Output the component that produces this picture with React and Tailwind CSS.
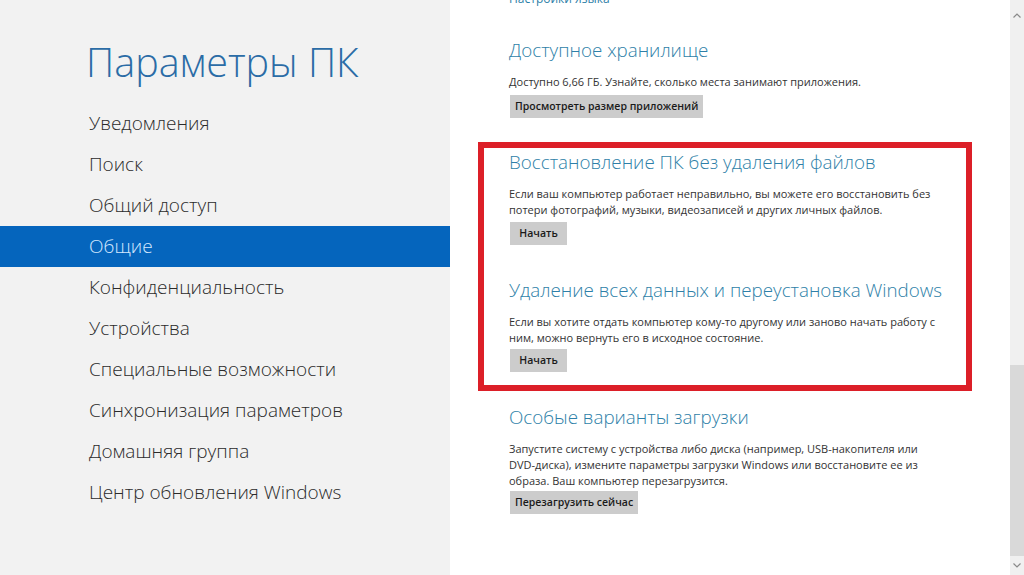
import React from "react";

const nav = [
  "Уведомления",
  "Поиск",
  "Общий доступ",
  "Общие",
  "Конфиденциальность",
  "Устройства",
  "Специальные возможности",
  "Синхронизация параметров",
  "Домашняя группа",
  "Центр обновления Windows",
];

function Btn({ children }) {
  return (
    <div className="flex pl-[1px]">
      <div className="h-[23px] min-w-[57px] px-[5px] bg-[#cccccc] flex items-center justify-center text-[10.5px] font-semibold text-[#1a1a1a] whitespace-nowrap">
        {children}
      </div>
    </div>
  );
}

function Heading({ children }) {
  return (
    <div className="text-[18.8px] leading-[28px] font-light text-[#2e7fa8] whitespace-nowrap">
      {children}
    </div>
  );
}

function Desc({ children, className = "" }) {
  return (
    <div className={"text-[11px] leading-[16px] text-[#333333] whitespace-nowrap " + className}>
      {children}
    </div>
  );
}

export default function App() {
  return (
    <div className="w-[1024px] h-[575px] overflow-hidden flex bg-white font-['Open_Sans','Noto_Sans',sans-serif]">
      <aside className="w-[450px] shrink-0 bg-[#f2f2f2] flex flex-col pt-[38px]">
        <h1 className="pl-[86px] text-[39.5px] leading-[48px] font-light text-[#2b6ca6] whitespace-nowrap">
          Параметры ПК
        </h1>
        <nav className="mt-[17px] flex flex-col">
          {nav.map((n) => (
            <div
              key={n}
              className={
                "h-[41px] pl-[89px] flex items-center text-[19px] font-light whitespace-nowrap " +
                (n === "Общие" ? "bg-[#0565bd] text-[#d4e8ff]" : "text-[#2b2b2b]")
              }
            >
              {n}
            </div>
          ))}
        </nav>
      </aside>

      <main className="flex-1 flex min-w-0">
        <div className="flex-1 flex flex-col pl-[59px] min-w-0">
          <div className="-mt-[9px] text-[12px] leading-[16px] text-[#2e7fa8] whitespace-nowrap">
            Настройки языка
          </div>

          <div className="mt-[29px]">
            <Heading>Доступное хранилище</Heading>
            <Desc className="mt-[10px]">
              Доступно 6,66 ГБ. Узнайте, сколько места занимают приложения.
            </Desc>
            <div className="mt-[5px]">
              <Btn>Просмотреть размер приложений</Btn>
            </div>
          </div>

          <div className="mt-[24px] -ml-[31px] w-[494px] border-[6px] border-[#dc1f28] pl-[25px] pb-[13px]">
            <Heading>Восстановление ПК без удаления файлов</Heading>
            <Desc className="mt-[10px]">
              Если ваш компьютер работает неправильно, вы можете его восстановить без
              <br />
              потери фотографий, музыки, видеозаписей и других личных файлов.
            </Desc>
            <div className="mt-[4px]">
              <Btn>Начать</Btn>
            </div>

            <div className="mt-[31px]">
              <Heading>Удаление всех данных и переустановка Windows</Heading>
            </div>
            <Desc className="mt-[10px]">
              Если вы хотите отдать компьютер кому-то другому или заново начать работу с
              <br />
              ним, можно вернуть его в исходное состояние.
            </Desc>
            <div className="mt-[3px]">
              <Btn>Начать</Btn>
            </div>
          </div>

          <div className="mt-[12px]">
            <Heading>Особые варианты загрузки</Heading>
            <Desc className="mt-[10px] leading-[15.5px]">
              Запустите систему с устройства либо диска (например, USB-накопителя или
              <br />
              DVD-диска), измените параметры загрузки Windows или восстановите ее из
              <br />
              образа. Ваш компьютер перезагрузится.
            </Desc>
            <div className="mt-[2px]">
              <Btn>Перезагрузить сейчас</Btn>
            </div>
          </div>
        </div>

        <div className="w-[14px] shrink-0 bg-[#f0f0f0] flex flex-col">
          <div className="h-[30px] flex items-center justify-center">
            <svg width="8" height="5" viewBox="0 0 8 5" fill="none">
              <path d="M0.5 4.5L4 1L7.5 4.5" stroke="#8a8a8a" strokeWidth="1.2" />
            </svg>
          </div>
          <div className="h-[335px]" />
          <div className="h-[191px] bg-[#d9d9d9]" />
          <div className="flex-1 flex items-center justify-center">
            <svg width="8" height="5" viewBox="0 0 8 5" fill="none">
              <path d="M0.5 0.5L4 4L7.5 0.5" stroke="#8a8a8a" strokeWidth="1.2" />
            </svg>
          </div>
        </div>
      </main>
    </div>
  );
}
